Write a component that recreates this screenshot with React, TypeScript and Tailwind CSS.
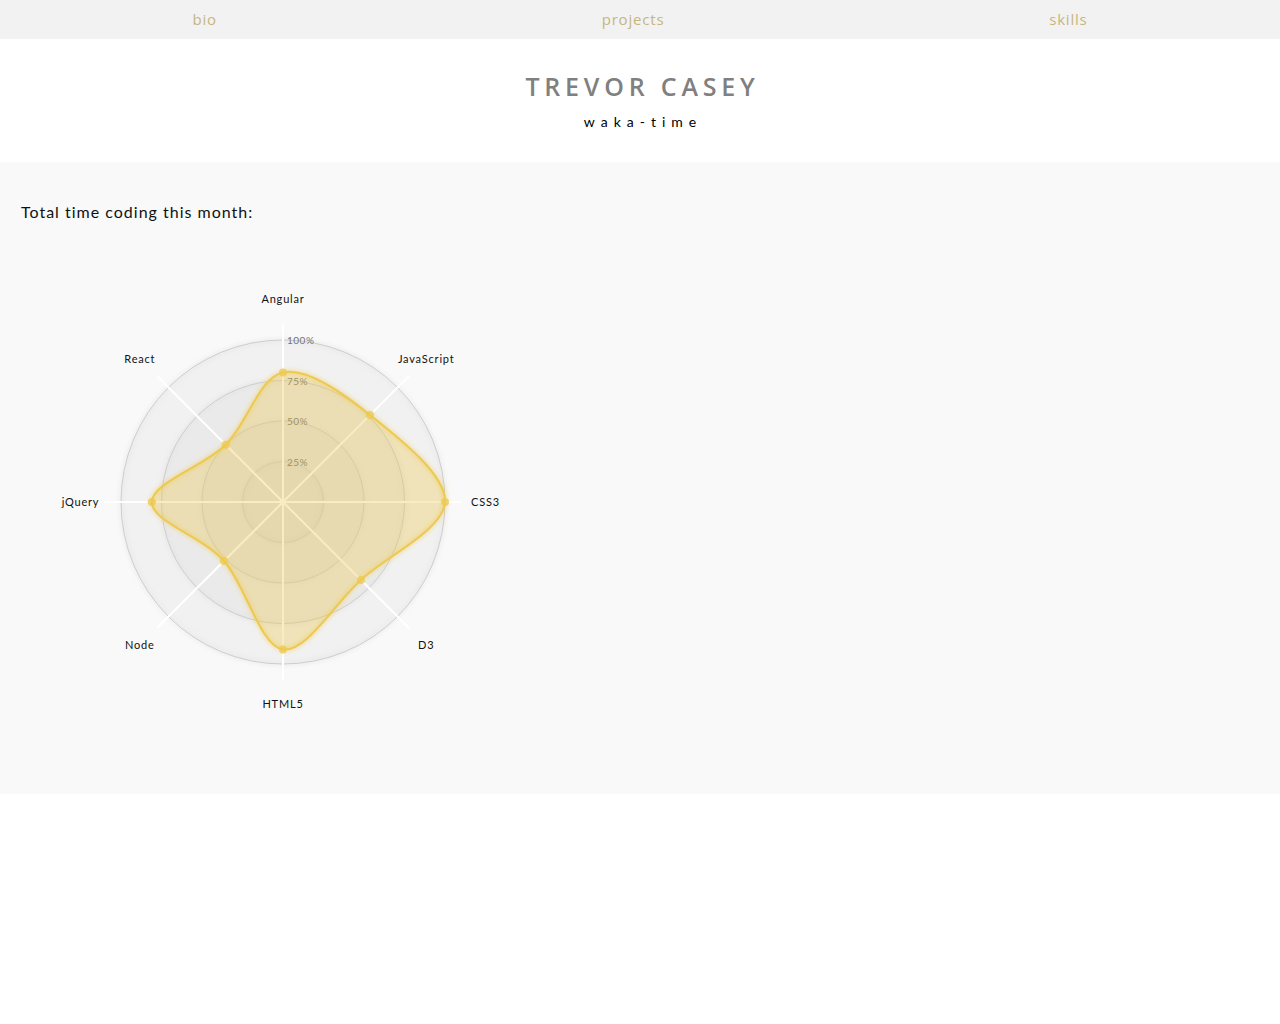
import React from "react";

const skills = [
  { axis: "Angular", value: 0.8 },
  { axis: "JavaScript", value: 0.76 },
  { axis: "CSS3", value: 1.0 },
  { axis: "D3", value: 0.68 },
  { axis: "HTML5", value: 0.91 },
  { axis: "Node", value: 0.515 },
  { axis: "jQuery", value: 0.81 },
  { axis: "React", value: 0.5 },
];

const CX = 283;
const CY = 262;
const R = 162;
const slice = (Math.PI * 2) / skills.length;

function pt(r: number, i: number) {
  return [r * Math.cos(slice * i - Math.PI / 2) + CX, r * Math.sin(slice * i - Math.PI / 2) + CY];
}

// closed cardinal curve, tension 0
function closedCurve(points: number[][]) {
  const n = points.length;
  let d = `M${points[0][0]},${points[0][1]}`;
  for (let i = 0; i < n; i++) {
    const p0 = points[(i - 1 + n) % n];
    const p1 = points[i];
    const p2 = points[(i + 1) % n];
    const p3 = points[(i + 2) % n];
    const c1x = p1[0] + (p2[0] - p0[0]) / 6;
    const c1y = p1[1] + (p2[1] - p0[1]) / 6;
    const c2x = p2[0] - (p3[0] - p1[0]) / 6;
    const c2y = p2[1] - (p3[1] - p1[1]) / 6;
    d += `C${c1x},${c1y},${c2x},${c2y},${p2[0]},${p2[1]}`;
  }
  return d + "Z";
}

function RadarChart() {
  const dataPts = skills.map((s, i) => pt(R * s.value, i));
  const path = closedCurve(dataPts);

  return (
    <svg width="560" height="500" className="block">
      <defs>
        <filter id="glow">
          <feGaussianBlur stdDeviation="2.5" result="coloredBlur" />
          <feMerge>
            <feMergeNode in="coloredBlur" />
            <feMergeNode in="SourceGraphic" />
          </feMerge>
        </filter>
      </defs>

      {/* background circles */}
      {[4, 3, 2, 1].map((l) => (
        <circle
          key={l}
          cx={CX}
          cy={CY}
          r={(R / 4) * l}
          fill="#CDCDCD"
          fillOpacity={0.1}
          stroke="#CDCDCD"
          filter="url(#glow)"
        />
      ))}

      {/* axes */}
      {skills.map((s, i) => {
        const [x, y] = pt(R * 1.1, i);
        return <line key={s.axis} x1={CX} y1={CY} x2={x} y2={y} stroke="white" strokeWidth={2} />;
      })}

      {/* level labels */}
      {[1, 2, 3, 4].map((l) => (
        <text
          key={l}
          x={CX + 4}
          y={CY - (R / 4) * l}
          dy="0.4em"
          fontSize="10px"
          fill="#737373"
          letterSpacing="0.5px"
          fontFamily="Lato, sans-serif"
        >
          {l * 25}%
        </text>
      ))}

      {/* axis labels */}
      {skills.map((s, i) => {
        const [x, y] = pt(R * 1.25, i);
        return (
          <text
            key={s.axis}
            x={x}
            y={y}
            dy="0.35em"
            textAnchor="middle"
            fontSize="11px"
            fill="#111"
            letterSpacing="0.8px"
            fontFamily="Lato, sans-serif"
          >
            {s.axis}
          </text>
        );
      })}

      {/* area */}
      <path d={path} fill="#EDC951" fillOpacity={0.35} />
      <path d={path} fill="none" stroke="#EDC951" strokeWidth={2} filter="url(#glow)" />
      {dataPts.map((p, i) => (
        <circle key={i} cx={p[0]} cy={p[1]} r={4} fill="#EDC951" fillOpacity={0.8} />
      ))}
    </svg>
  );
}

export default function App() {
  const navLinks = ["bio", "projects", "skills"];

  return (
    <div className="min-h-screen bg-white" style={{ fontFamily: "Lato, 'Open Sans', sans-serif" }}>
      <nav className="h-[39px] bg-[#f2f2f2] flex items-center justify-around">
        {navLinks.map((l) => (
          <a key={l} href={`#${l}`} className="text-[15px] text-[#c6b680] font-['Open_Sans',sans-serif] tracking-[0.8px]">
            {l}
          </a>
        ))}
      </nav>

      <header className="h-[123px] flex flex-col items-center pt-[32px]">
        <h1 className="text-[25px] leading-[30px] font-semibold text-[#808080] tracking-[4.8px] font-['Open_Sans',sans-serif] pl-[5px]">
          TREVOR CASEY
        </h1>
        <p className="mt-[11px] text-[14px] leading-[20px] text-black tracking-[6px] pl-[6px]">waka-time</p>
      </header>

      <section className="h-[632px] bg-[#f9f9f9] pt-[38px] px-[21px]">
        <p className="text-[16px] leading-[24px] text-[#111] tracking-[1px]">Total time coding this month:</p>
        <div className="mt-4 -ml-[21px]">
          <RadarChart />
        </div>
      </section>
    </div>
  );
}
